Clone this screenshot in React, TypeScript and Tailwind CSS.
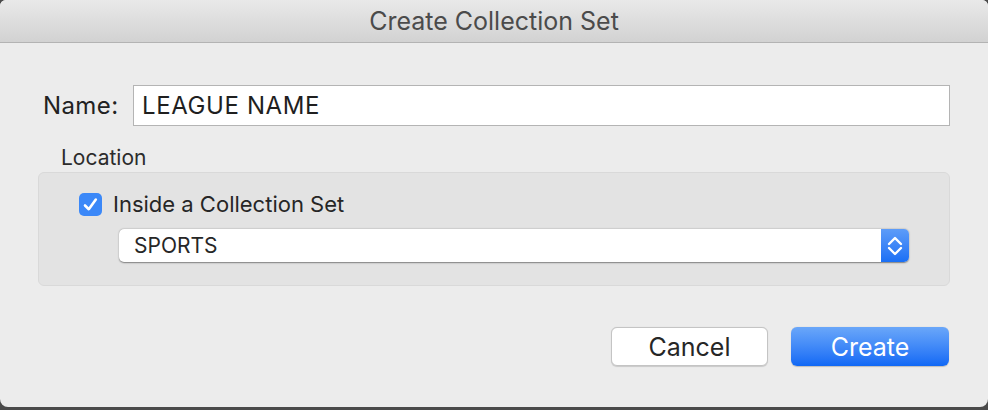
export default function App() {
  return (
    <div className="h-[410px] w-[988px] bg-[#4a4a4a] font-['Inter','Noto_Sans',sans-serif]">
      <div className="flex h-[407px] flex-col overflow-hidden rounded-b-[8px] rounded-t-[6px] bg-[#ececec]">
        {/* title bar */}
        <div className="flex h-[43px] shrink-0 items-center justify-center border-b border-[#b3b3b3] bg-gradient-to-b from-[#e9e9e9] to-[#d2d2d2]">
          <span className="text-[25px] leading-[30px] text-[#4b4b4b]">Create Collection Set</span>
        </div>

        <div className="flex flex-1 flex-col px-[38px] pt-[42px]">
          {/* name row */}
          <div className="flex items-center">
            <label className="w-[95px] pl-[5px] text-[24px] tracking-[0.4px] text-[#222]">Name:</label>
            <div className="flex h-[41px] flex-1 items-center border border-[#b4b4b4] bg-white px-[8px] text-[24px] tracking-[0.6px] text-[#1f1f1f]">
              LEAGUE NAME
            </div>
          </div>

          <div className="mt-[19px] pl-[23px] text-[21px] leading-[26px] text-[#2b2b2b]">Location</div>

          {/* group box */}
          <div className="mt-[1px] flex h-[114px] flex-col rounded-[6px] border border-[#d9d9d9] bg-[#e3e3e3] pl-[40px] pr-[40px] pt-[20px]">
            <div className="flex h-[23px] items-center gap-[11px]">
              <div className="flex h-[23px] w-[23px] items-center justify-center rounded-[5px] bg-[#3b88f8]">
                <svg width="17" height="17" viewBox="0 0 17 17" fill="none">
                  <path d="M3 9.5 L6.8 13.2 L13.8 3.5" stroke="white" strokeWidth="2.6" strokeLinecap="round" strokeLinejoin="round" />
                </svg>
              </div>
              <span className="text-[22px] leading-[23px] text-[#262626]">Inside a Collection Set</span>
            </div>
            <div className="ml-[40px] mt-[13px] flex h-[33px] overflow-hidden rounded-[5px] bg-white shadow-[0_0.5px_1.5px_rgba(0,0,0,0.45)]">
              <div className="flex flex-1 items-center pl-[15px] text-[21px] text-[#262626]">SPORTS</div>
              <div className="flex w-[28px] items-center justify-center bg-gradient-to-b from-[#5d9cf8] to-[#1a6ff5]">
                <svg width="16" height="24" viewBox="0 0 16 24" fill="none">
                  <path d="M2 10 L8 4 L14 10" stroke="white" strokeWidth="2.4" strokeLinecap="round" strokeLinejoin="round" />
                  <path d="M2 14 L8 20 L14 14" stroke="white" strokeWidth="2.4" strokeLinecap="round" strokeLinejoin="round" />
                </svg>
              </div>
            </div>
          </div>

          {/* buttons */}
          <div className="mt-[41px] flex justify-end gap-[23px] pr-[1px]">
            <button className="h-[39px] w-[157px] rounded-[6px] border border-[#c4c4c4] bg-white text-[25px] leading-[30px] text-[#262626] shadow-[0_0.5px_1px_rgba(0,0,0,0.15)]">
              Cancel
            </button>
            <button className="h-[39px] w-[158px] rounded-[6px] bg-gradient-to-b from-[#6aa7f9] to-[#0f68f5] text-[25px] leading-[30px] text-white shadow-[0_0.5px_1px_rgba(0,0,0,0.2)]">
              Create
            </button>
          </div>
        </div>
      </div>
    </div>
  );
}
